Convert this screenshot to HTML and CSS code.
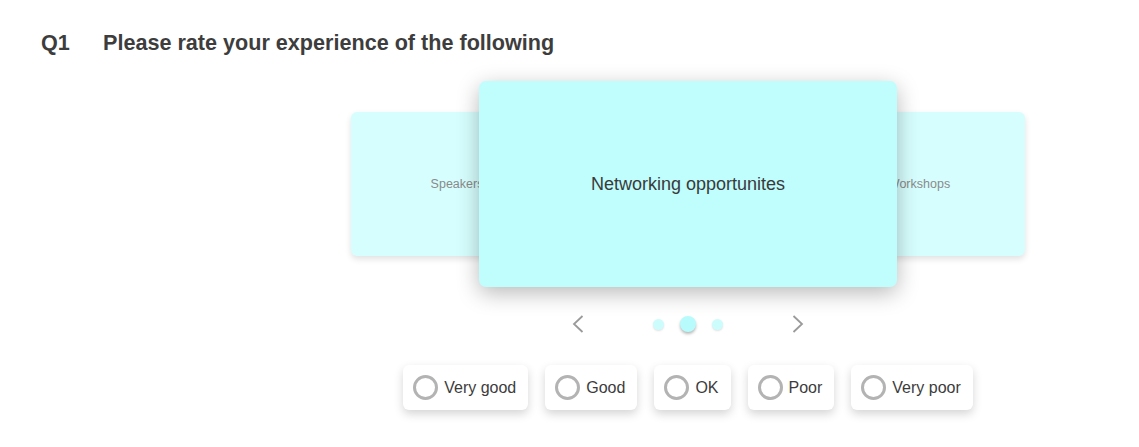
FILE: index.html
```html
<!DOCTYPE html>
<html lang="en">
<head>
<meta charset="utf-8">
<title>Q1</title>
<link rel="stylesheet" href="styles.css">
</head>
<body>
<div class="question">
  <div class="q-head">
    <span class="q-num">Q1</span>
    <span class="q-title">Please rate your experience of the following</span>
  </div>
  <div class="q-body">
    <div class="carousel">
      <div class="card side"><span class="side-text">Speakers</span></div>
      <div class="card main">Networking opportunites</div>
      <div class="card side"><span class="side-text">Workshops</span></div>
    </div>
    <div class="nav">
      <span class="arrow">
        <svg width="12" height="18" viewBox="0 0 12 18"><path d="M10.5 1 L2 9 L10.5 17" fill="none" stroke="#9a9a9a" stroke-width="1.8"/></svg>
      </span>
      <div class="dots">
        <span class="dot"></span>
        <span class="dot active"></span>
        <span class="dot"></span>
      </div>
      <span class="arrow">
        <svg width="12" height="18" viewBox="0 0 12 18"><path d="M1.5 1 L10 9 L1.5 17" fill="none" stroke="#9a9a9a" stroke-width="1.8"/></svg>
      </span>
    </div>
    <div class="options">
      <label class="option"><span class="radio"></span><span class="label">Very good</span></label>
      <label class="option"><span class="radio"></span><span class="label">Good</span></label>
      <label class="option"><span class="radio"></span><span class="label">OK</span></label>
      <label class="option"><span class="radio"></span><span class="label">Poor</span></label>
      <label class="option"><span class="radio"></span><span class="label">Very poor</span></label>
    </div>
  </div>
</div>
</body>
</html>
```

FILE: styles.css
```css
* { box-sizing: border-box; }

html, body {
  margin: 0;
  padding: 0;
  background: #ffffff;
  font-family: "Liberation Sans", Arial, sans-serif;
  color: #3c3c3c;
}

.question {
  padding-top: 30px;
  padding-bottom: 37px;
}

.q-head {
  display: flex;
  padding-left: 41px;
  font-size: 21.6px;
  line-height: 26px;
  font-weight: bold;
  color: #3d3d3d;
}

.q-num {
  width: 62px;
}

.q-body {
  margin-left: 351px;
  width: 674px;
}

.carousel {
  margin-top: 25px;
  display: flex;
  align-items: center;
  height: 206px;
}

.card {
  display: flex;
  align-items: center;
  justify-content: center;
  border-radius: 6px;
}

.side {
  width: 212px;
  height: 144px;
  background: #d7fefe;
  box-shadow: 0 3px 6px rgba(0, 0, 0, 0.12);
}

.side-text {
  font-size: 12.5px;
  color: #8a8a8a;
}

.main {
  position: relative;
  z-index: 1;
  width: 418px;
  height: 206px;
  margin: 0 -84px;
  background: #c0fdfd;
  border-radius: 7px;
  font-size: 18px;
  color: #3a3a3a;
  box-shadow: 0 6px 22px rgba(0, 0, 0, 0.28);
}

.nav {
  margin-top: 20px;
  height: 34px;
  display: flex;
  align-items: center;
  justify-content: center;
  gap: 69px;
}

.arrow {
  display: flex;
  width: 12px;
  height: 18px;
}

.dots {
  display: flex;
  align-items: center;
  gap: 16px;
}

.dot {
  width: 11px;
  height: 11px;
  border-radius: 50%;
  background: #cdfcfc;
  box-shadow: 0 1px 2px rgba(0, 0, 0, 0.12);
}

.dot.active {
  width: 16px;
  height: 16px;
  background: #b8fbfc;
  box-shadow: 0 2px 3px rgba(0, 0, 0, 0.28);
}

.options {
  margin-top: 24px;
  display: flex;
  justify-content: center;
  gap: 17px;
}

.option {
  display: flex;
  align-items: center;
  height: 45px;
  padding: 0 12px 0 10px;
  background: #ffffff;
  border-radius: 6px;
  box-shadow: 0 4px 10px rgba(0, 0, 0, 0.17);
  font-size: 16px;
  color: #3c3c3c;
}

.radio {
  width: 25px;
  height: 25px;
  border: 3px solid #b3b3b3;
  border-radius: 50%;
  margin-right: 6px;
  flex: none;
}
```
